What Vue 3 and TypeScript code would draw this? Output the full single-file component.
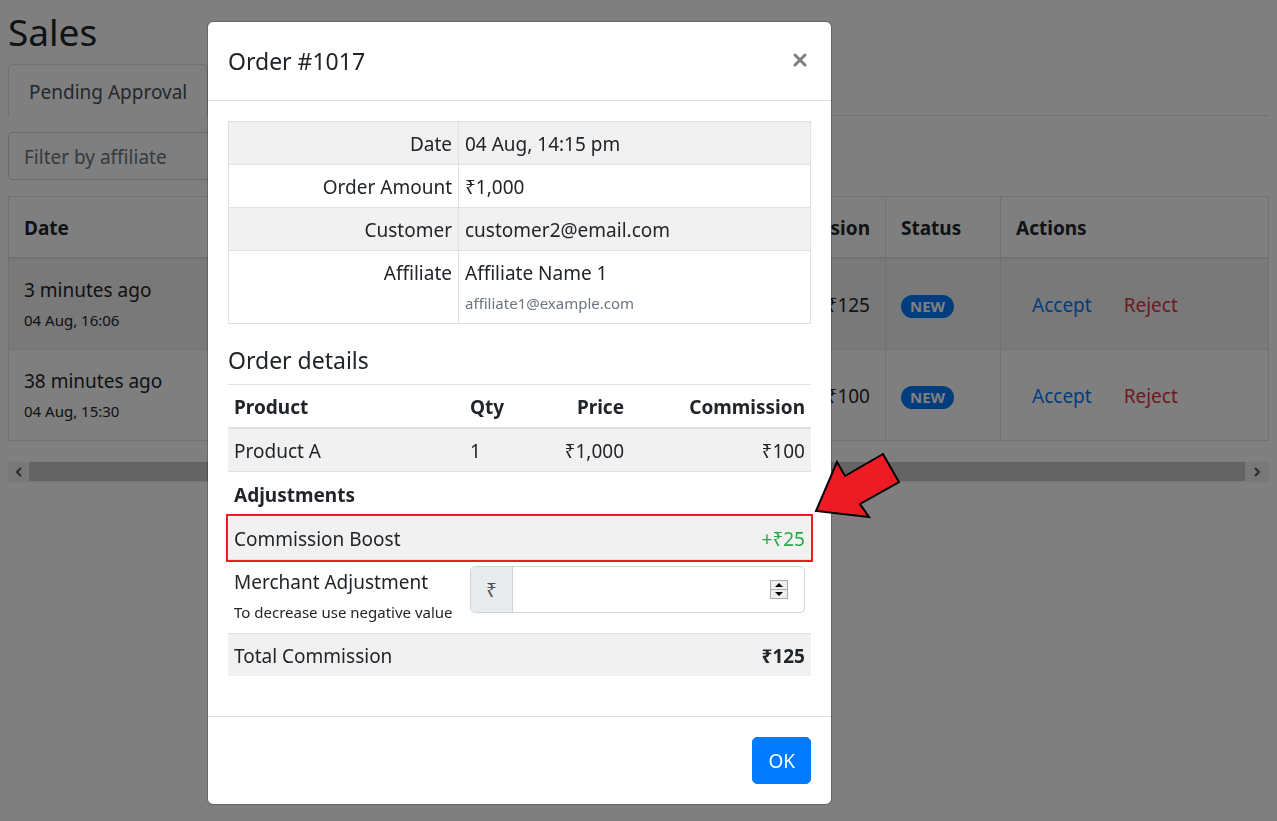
<script setup lang="ts">
import { ref } from 'vue'

interface Sale {
  ago: string
  date: string
  commission: string
}

const sales: Sale[] = [
  { ago: '3 minutes ago', date: '04 Aug, 16:06', commission: '₹125' },
  { ago: '38 minutes ago', date: '04 Aug, 15:30', commission: '₹100' },
]

const open = ref(true)
const filter = ref('')
const adjustment = ref<number | null>(null)

function step(by: number) {
  adjustment.value = (Number(adjustment.value) || 0) + by
}
</script>

<template>
  <div class="app">
    <main class="page">
      <h1>Sales</h1>
      <nav class="tabs">
        <a href="#pending" class="tab">Pending Approval</a>
      </nav>
      <input v-model="filter" class="field" type="text" placeholder="Filter by affiliate" aria-label="Filter by affiliate" />
      <table class="sales">
        <thead>
          <tr>
            <th>Date</th>
            <th class="num c-comm">Commission</th>
            <th class="c-status">Status</th>
            <th class="c-actions">Actions</th>
          </tr>
        </thead>
        <tbody>
          <tr v-for="s in sales" :key="s.date">
            <td>
              <div>{{ s.ago }}</div>
              <div class="small">{{ s.date }}</div>
            </td>
            <td class="num">{{ s.commission }}</td>
            <td><span class="badge">NEW</span></td>
            <td>
              <div class="actions">
                <button type="button" class="link">Accept</button>
                <button type="button" class="link danger">Reject</button>
              </div>
            </td>
          </tr>
        </tbody>
      </table>
      <div class="scroller">
        <button type="button" class="scroll-btn" aria-label="Scroll left">
          <svg width="8" height="10" viewBox="0 0 8 10"><path d="M6 1 2 5l4 4" /></svg>
        </button>
        <div class="thumb"></div>
        <button type="button" class="scroll-btn end" aria-label="Scroll right">
          <svg width="8" height="10" viewBox="0 0 8 10"><path d="M2 1l4 4-4 4" /></svg>
        </button>
      </div>
    </main>

    <div v-if="open" class="backdrop">
      <section class="modal" role="dialog" aria-modal="true" aria-labelledby="order-title">
        <header class="modal-head">
          <h2 id="order-title">Order #1017</h2>
          <button type="button" class="close" aria-label="Close" @click="open = false">
            <svg width="16" height="16" viewBox="0 0 16 16"><path d="M3 3l10 10M13 3 3 13" /></svg>
          </button>
        </header>

        <div class="modal-body">
          <table class="info">
            <tbody>
              <tr><th scope="row">Date</th><td>04 Aug, 14:15 pm</td></tr>
              <tr><th scope="row">Order Amount</th><td>₹1,000</td></tr>
              <tr><th scope="row">Customer</th><td>customer2@email.com</td></tr>
              <tr>
                <th scope="row">Affiliate</th>
                <td>
                  <div>Affiliate Name 1</div>
                  <div class="small muted">affiliate1@example.com</div>
                </td>
              </tr>
            </tbody>
          </table>

          <h3>Order details</h3>
          <table class="details">
            <thead>
              <tr>
                <th class="d-product">Product</th>
                <th class="d-qty">Qty</th>
                <th class="d-price num">Price</th>
                <th class="num">Commission</th>
              </tr>
            </thead>
            <tbody>
              <tr class="shade">
                <td>Product A</td>
                <td>1</td>
                <td class="num">₹1,000</td>
                <td class="num">₹100</td>
              </tr>
              <tr class="tall">
                <th colspan="4">Adjustments</th>
              </tr>
              <tr class="shade tall marked">
                <td colspan="3">Commission Boost</td>
                <td class="num plus">+₹25</td>
              </tr>
              <tr>
                <td>
                  <label for="adjustment">Merchant Adjustment</label>
                  <div class="small">To decrease use negative value</div>
                </td>
                <td colspan="3" class="entry">
                  <div class="group">
                    <span class="addon">₹</span>
                    <input id="adjustment" v-model="adjustment" type="number" />
                    <span class="spin">
                      <button type="button" aria-label="Increase" @click="step(1)">
                        <svg width="8" height="4" viewBox="0 0 8 4"><path d="M0 4 4 0l4 4z" /></svg>
                      </button>
                      <button type="button" aria-label="Decrease" @click="step(-1)">
                        <svg width="8" height="4" viewBox="0 0 8 4"><path d="M0 0h8L4 4z" /></svg>
                      </button>
                    </span>
                  </div>
                </td>
              </tr>
              <tr class="shade">
                <td colspan="3">Total Commission</td>
                <td class="num total">₹125</td>
              </tr>
            </tbody>
          </table>
        </div>

        <footer class="modal-foot">
          <button type="button" class="ok" @click="open = false">OK</button>
        </footer>

        <svg class="arrow" width="90" height="70" viewBox="0 0 90 70" aria-hidden="true">
          <path d="M3 59 24 10l8 14 38-22 16 28-39 22 9 13z" />
        </svg>
      </section>
    </div>
  </div>
</template>

<style>
body {
  margin: 0;
  background: #fff;
}
</style>

<style scoped>
.app {
  font-family: "Noto Sans", "Open Sans", sans-serif;
  font-size: 19px;
  line-height: 30px;
  color: #212529;
}

.app *,
.app *::before {
  box-sizing: border-box;
}

button,
input {
  font: inherit;
  margin: 0;
}

button {
  cursor: pointer;
}

.page {
  padding: 8px;
}

h1,
h2,
h3 {
  margin: 0;
  font-weight: 400;
}

h1 {
  font-size: 37px;
  line-height: 48px;
  margin-bottom: 8px;
}

.tabs {
  display: flex;
  height: 52px;
  border-bottom: 1px solid #dee2e6;
  margin-bottom: 16px;
}

.tab {
  height: 52px;
  padding: 12px 20px;
  border: 1px solid #dee2e6;
  border-bottom-color: #fff;
  border-radius: 5px 5px 0 0;
  color: #495057;
  background: #fff;
  text-decoration: none;
}

.field {
  display: block;
  width: 320px;
  height: 48px;
  padding: 9px 15px 7px;
  border: 1px solid #ced4da;
  border-radius: 5px;
  margin-bottom: 16px;
}

.field::placeholder {
  color: #6c757d;
  opacity: 1;
}

table {
  width: 100%;
  border-collapse: collapse;
}

th {
  text-align: left;
}

.num {
  text-align: right;
}

.small {
  font-size: 15px;
}

.muted {
  color: #6c757d;
}

.sales th,
.sales td {
  border: 1px solid #dee2e6;
  padding: 16px 15px 14px;
}

.sales thead th {
  border-bottom-width: 2px;
}

.sales tbody tr:nth-child(odd) {
  background: #f2f2f2;
}

.c-comm {
  width: 200px;
}

.c-status {
  width: 115px;
}

.c-actions {
  width: 268px;
}

.badge {
  display: inline-block;
  padding: 0 9px;
  border-radius: 12px;
  background: #007bff;
  color: #fff;
  font-size: 15px;
  font-weight: 700;
  line-height: 23px;
  vertical-align: middle;
}

.actions {
  display: flex;
}

.link {
  padding: 0 16px;
  border: 0;
  background: none;
  color: #007bff;
}

.link.danger {
  color: #dc3545;
}

.scroller {
  display: flex;
  height: 20px;
  margin-top: 21px;
  background: #f1f1f1;
}

.scroll-btn {
  display: grid;
  place-items: center;
  width: 21px;
  padding: 0;
  border: 0;
  background: none;
}

.scroll-btn.end {
  width: 24px;
}

.scroll-btn svg {
  fill: none;
  stroke: #505050;
  stroke-width: 2;
}

.thumb {
  flex: 1;
  height: 19px;
  background: #c9c9c9;
}

.backdrop {
  position: fixed;
  inset: 0;
  overflow: auto;
  padding: 21px 0 0 207px;
  background: rgba(0, 0, 0, 0.5);
}

.modal {
  position: relative;
  width: 625px;
  border: 1px solid rgba(0, 0, 0, 0.2);
  border-radius: 6px;
  background: #fff;
  background-clip: padding-box;
}

.modal-head {
  display: flex;
  justify-content: space-between;
  align-items: flex-start;
  padding: 20px;
  border-bottom: 1px solid #dee2e6;
}

h2,
h3 {
  font-size: 23px;
  line-height: 38px;
}

.close {
  display: grid;
  padding: 10px 3px;
  border: 0;
  background: none;
}

.close svg {
  fill: none;
  stroke: #7f7f7f;
  stroke-width: 3;
  stroke-linecap: round;
}

.modal-body {
  padding: 20px 20px 40px;
}

.info th,
.info td {
  border: 1px solid #dee2e6;
  padding: 7px 6px 5px;
  vertical-align: top;
}

.info th {
  width: 230px;
  font-weight: 400;
  text-align: right;
}

.info tr:nth-child(odd),
.shade {
  background: #f1f1f1;
}

h3 {
  margin: 17px 0 5px;
}

.details {
  table-layout: fixed;
}

.details th,
.details td {
  border-top: 1px solid #dee2e6;
  padding: 7px 6px 5px;
  vertical-align: top;
}

.details thead th {
  border-bottom: 2px solid #dee2e6;
}

.details .tall th,
.details .tall td {
  padding-top: 8px;
}

.details .entry {
  padding: 6px 6px 20px;
}

.d-product {
  width: 236px;
}

.d-qty {
  width: 76px;
}

.d-price {
  width: 90px;
}

.marked {
  outline: 2px solid #ed1c24;
}

.plus {
  color: #28a745;
}

.total {
  font-weight: 700;
}

label {
  display: block;
}

.group {
  display: flex;
  height: 47px;
  border: 1px solid #ced4da;
  border-radius: 5px;
  background: #fff;
  overflow: hidden;
}

.addon {
  width: 42px;
  padding: 8px 0;
  border-right: 1px solid #ced4da;
  background: #e9ecef;
  color: #495057;
  text-align: center;
}

.group input {
  flex: 1;
  min-width: 0;
  padding: 0 15px;
  border: 0;
  outline: 0;
  appearance: textfield;
}

.group input::-webkit-inner-spin-button {
  appearance: none;
}

.spin {
  display: flex;
  flex-direction: column;
  align-self: center;
  width: 18px;
  margin-right: 16px;
  border: 1px solid #acacac;
}

.spin button {
  display: grid;
  place-items: center;
  height: 8px;
  padding: 0;
  border: 0;
  background: #efefef;
}

.spin button + button {
  height: 9px;
  border-top: 1px solid #acacac;
}

.modal-foot {
  display: flex;
  justify-content: flex-end;
  padding: 20px;
  border-top: 1px solid #dee2e6;
}

.ok {
  padding: 9px 15px 7px;
  border: 1px solid #007bff;
  border-radius: 5px;
  background: #007bff;
  color: #fff;
  line-height: 29px;
}

.arrow {
  position: absolute;
  left: 605px;
  top: 430px;
  fill: #ed1c24;
  stroke: #000;
  stroke-width: 2;
}
</style>
